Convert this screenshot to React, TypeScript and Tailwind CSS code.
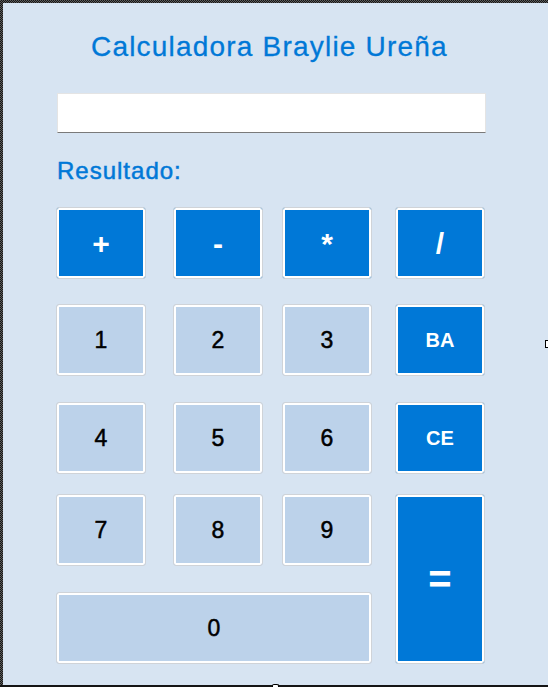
import React from "react";

type Key = { label: string; pos: string; kind: "op" | "num" | "fn" | "eq" };

const keys: Key[] = [
  { label: "+", pos: "col-start-1 row-start-1", kind: "op" },
  { label: "-", pos: "col-start-3 row-start-1", kind: "op" },
  { label: "*", pos: "col-start-5 row-start-1", kind: "op" },
  { label: "/", pos: "col-start-7 row-start-1", kind: "op" },
  { label: "1", pos: "col-start-1 row-start-3", kind: "num" },
  { label: "2", pos: "col-start-3 row-start-3", kind: "num" },
  { label: "3", pos: "col-start-5 row-start-3", kind: "num" },
  { label: "BA", pos: "col-start-7 row-start-3", kind: "fn" },
  { label: "4", pos: "col-start-1 row-start-5", kind: "num" },
  { label: "5", pos: "col-start-3 row-start-5", kind: "num" },
  { label: "6", pos: "col-start-5 row-start-5", kind: "num" },
  { label: "CE", pos: "col-start-7 row-start-5", kind: "fn" },
  { label: "7", pos: "col-start-1 row-start-7", kind: "num" },
  { label: "8", pos: "col-start-3 row-start-7", kind: "num" },
  { label: "9", pos: "col-start-5 row-start-7", kind: "num" },
  { label: "=", pos: "col-start-7 row-start-7 row-end-10", kind: "eq" },
  { label: "0", pos: "col-start-1 col-end-6 row-start-9", kind: "num" },
];

const kindClass: Record<Key["kind"], string> = {
  op: "bg-[#0078d7] text-white font-bold text-[30px]",
  num: "bg-[#bcd2ea] text-black text-[23px] [-webkit-text-stroke:0.5px_#000]",
  fn: "bg-[#0078d7] text-white font-bold text-[20px]",
  eq: "bg-[#0078d7] text-white font-bold text-[40px]",
};

export default function App() {
  return (
    <div className="relative w-[548px] h-[687px] pl-[3px] pt-[3px] border-b-2 border-[#151515] [background:repeating-conic-gradient(#161616_0_25%,#5c5c5c_0_50%)_0_0/2px_2px] font-['Liberation_Sans',Arial,sans-serif]">
      <div className="h-full bg-[#d7e4f2] flex flex-col">
        <h1 className="mt-[30px] ml-[88px] text-[28px] leading-[28px] tracking-[1.2px] text-[#0078d7] font-normal [-webkit-text-stroke:0.3px_#0078d7]">
          Calculadora Braylie Ureña
        </h1>
        <input
          type="text"
          className="mt-[32px] ml-[54px] w-[429px] h-[40px] bg-white border border-[#e4e4e4] border-b-[#7a7a7a] outline-none"
        />
        <p className="mt-[26px] ml-[54px] text-[24px] leading-[24px] tracking-[1px] text-[#0078d7] [-webkit-text-stroke:0.5px_#0078d7]">
          Resultado:
        </p>
        <div className="mt-[24px] ml-[53px] grid grid-cols-[90px_27px_90px_19px_90px_23px_90px] grid-rows-[72px_25px_72px_26px_72px_20px_72px_26px_72px]">
          {keys.map((k) => (
            <button
              key={k.label}
              className={`${k.pos} ${kindClass[k.kind]} flex items-center justify-center rounded-[3px] border border-[#cfd3d8] shadow-[inset_0_0_0_2px_#ffffff]`}
            >
              {k.label}
            </button>
          ))}
        </div>
      </div>
      <span className="absolute right-0 top-[340px] w-[3px] h-[8px] bg-white border border-r-0 border-black" />
      <span className="absolute left-[272px] bottom-[-2px] w-[7px] h-[3px] bg-white border border-b-0 border-black rounded-t-[2px]" />
    </div>
  );
}
